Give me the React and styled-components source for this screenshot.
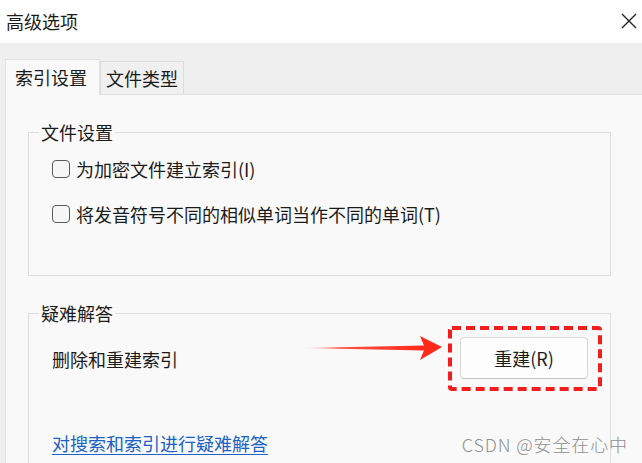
import React from "react";
import styled, { createGlobalStyle } from "styled-components";

const GlobalStyle = createGlobalStyle`
    html, body {
        margin: 0;
        padding: 0;
        background: #efefef;
    }
    body {
        font-family: "Noto Sans CJK SC", "Noto Sans", sans-serif;
        color: #1b1b1b;
    }
`;

const Window = styled.div`
    position: relative;
    display: flex;
    flex-direction: column;
    width: 642px;
    height: 463px;
    overflow: hidden;
    background: #efefef;
`;

const TitleBar = styled.div`
    flex-shrink: 0;
    display: flex;
    align-items: center;
    justify-content: space-between;
    height: 43px;
    padding: 0 2px 0 6px;
    background: #ffffff;
    border-bottom: 1px solid #ececec;
    font-size: 18px;

    .title {
        line-height: 1;
        margin-top: -2px;
    }
`;

const CloseButton = styled.div`
    display: flex;
    align-items: center;
    justify-content: center;
    width: 22px;
    height: 22px;
    margin-top: -2px;
`;

const Body = styled.div`
    flex: 1;
    min-height: 0;
    display: flex;
    flex-direction: column;
    padding: 15px 0 0 5px;
`;

const TabStrip = styled.div`
    flex-shrink: 0;
    display: flex;
    align-items: flex-end;
    height: 35px;
`;

const Tab = styled.div`
    box-sizing: border-box;
    display: flex;
    align-items: center;
    font-size: 18px;
    height: ${(p) => (p.$active ? "36px" : "33px")};
    width: ${(p) => (p.$active ? "95px" : "84px")};
    padding-left: ${(p) => (p.$active ? "9px" : "5px")};
    padding-bottom: ${(p) => (p.$active ? "2px" : "0")};
    background: ${(p) => (p.$active ? "#f9f9f9" : "#f0f0f0")};
    border: 1px solid ${(p) => (p.$active ? "#e2e2e2" : "#dcdcdc")};
    border-bottom: none;
    margin-bottom: ${(p) => (p.$active ? "-1px" : "0")};
    position: relative;
    z-index: ${(p) => (p.$active ? 1 : 0)};
`;

const Panel = styled.div`
    flex: 1;
    min-height: 0;
    background: #f9f9f9;
    border-top: 1px solid #e2e2e2;
    border-left: 1px solid #e2e2e2;
    padding: 25px 0 0 22px;
`;

const GroupBox = styled.fieldset`
    box-sizing: border-box;
    width: 583px;
    height: ${(p) => p.$height};
    margin: 0 0 ${(p) => p.$gap || "0"} 0;
    padding: 0 8px 0 10px;
    border: 1px solid #dedede;
    min-inline-size: 0;

    legend {
        padding: 0 2px;
        font-size: 18px;
        line-height: 24px;
    }
`;

const Options = styled.div`
    display: flex;
    flex-direction: column;
    gap: 17px;
    padding: 11px 0 0 13px;
`;

const CheckRow = styled.label`
    display: flex;
    align-items: center;
    gap: 6px;
    height: 28px;
    font-size: 18px;
`;

const CheckBox = styled.span`
    box-sizing: border-box;
    width: 18px;
    height: 18px;
    border: 1.5px solid #5c5c5c;
    border-radius: 4px;
    background: #f6f6f6;
`;

const RebuildRow = styled.div`
    display: flex;
    align-items: center;
    padding-left: 13px;
    margin-top: 1px;
    font-size: 18px;
`;

const Arrow = styled.svg`
    margin-left: auto;
    margin-right: 5px;
    margin-bottom: 22px;
`;

const Highlight = styled.div`
    position: relative;
    padding: 11px 14px 12px 12px;
`;

const DashFrame = styled.svg`
    position: absolute;
    inset: 0;
    width: 100%;
    height: 100%;
    pointer-events: none;
`;

const Button = styled.button`
    box-sizing: border-box;
    width: 128px;
    height: 42px;
    font-family: inherit;
    font-size: 18px;
    color: #1b1b1b;
    background: #fdfdfd;
    border: 1px solid #d6d6d6;
    border-bottom-color: #c4c4c4;
    border-radius: 4px;
`;

const HelpLink = styled.a`
    display: inline-block;
    margin: 40px 0 0 13px;
    font-size: 18px;
    line-height: 24px;
    color: #1a62c6;
    text-decoration: underline;
    text-underline-offset: 3px;
`;

const Watermark = styled.div`
    position: absolute;
    right: 14px;
    bottom: 6px;
    font-size: 18px;
    font-weight: 300;
    color: #909090;
    letter-spacing: 0.9px;
`;

const App = () => {
    return (
        <Window>
            <GlobalStyle />
            <TitleBar>
                <span className="title">高级选项</span>
                <CloseButton>
                    <svg width="16" height="16" viewBox="0 0 16 16">
                        <path
                            d="M1 1 L15 15 M15 1 L1 15"
                            stroke="#222"
                            strokeWidth="1.4"
                            fill="none"
                        />
                    </svg>
                </CloseButton>
            </TitleBar>
            <Body>
                <TabStrip>
                    <Tab $active>索引设置</Tab>
                    <Tab>文件类型</Tab>
                </TabStrip>
                <Panel>
                    <GroupBox $height="156px" $gap="25px">
                        <legend>文件设置</legend>
                        <Options>
                            <CheckRow>
                                <CheckBox />
                                为加密文件建立索引(I)
                            </CheckRow>
                            <CheckRow>
                                <CheckBox />
                                将发音符号不同的相似单词当作不同的单词(T)
                            </CheckRow>
                        </Options>
                    </GroupBox>
                    <GroupBox $height="220px">
                        <legend>疑难解答</legend>
                        <RebuildRow>
                            删除和重建索引
                            <Arrow width="142" height="26" viewBox="0 0 142 26">
                                <defs>
                                    <linearGradient id="shaft" x1="0" x2="1" y1="0" y2="0">
                                        <stop offset="0" stopColor="#ff2a1a" stopOpacity="0" />
                                        <stop offset="0.3" stopColor="#ff2a1a" stopOpacity="0.8" />
                                        <stop offset="1" stopColor="#ff2a1a" />
                                    </linearGradient>
                                </defs>
                                <path d="M0 13 L124 10.5 L124 15.5 Z" fill="url(#shaft)" />
                                <path d="M119 1 L141 12 L119 25 L124 13 Z" fill="#ff2a1a" />
                            </Arrow>
                            <Highlight>
                                <Button>重建(R)</Button>
                                <DashFrame>
                                    <rect
                                        x="2"
                                        y="2"
                                        width="calc(100% - 4px)"
                                        height="calc(100% - 4px)"
                                        rx="2"
                                        fill="none"
                                        stroke="#f21d1d"
                                        strokeWidth="4"
                                        strokeDasharray="9 5"
                                    />
                                </DashFrame>
                            </Highlight>
                        </RebuildRow>
                        <HelpLink href="#">对搜索和索引进行疑难解答</HelpLink>
                    </GroupBox>
                </Panel>
            </Body>
            <Watermark>CSDN @安全在心中</Watermark>
        </Window>
    );
};

export default App;
